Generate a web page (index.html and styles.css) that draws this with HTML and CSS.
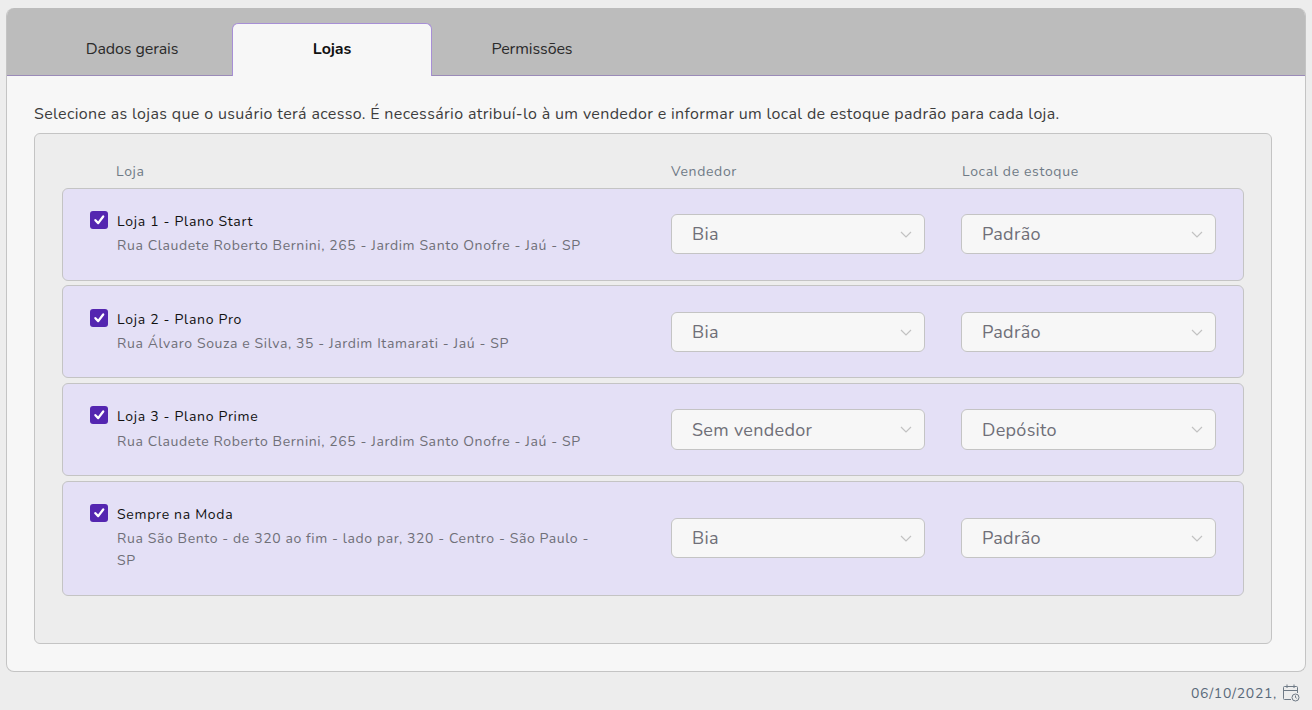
FILE: index.html
```html
<!DOCTYPE html>
<html lang="pt-BR">
<head>
<meta charset="utf-8">
<title>Lojas</title>
<link rel="stylesheet" href="styles.css">
</head>
<body>
<main class="card">
  <nav class="tabs">
    <div class="tab">Dados gerais</div>
    <div class="tab active">Lojas</div>
    <div class="tab">Permissões</div>
  </nav>
  <section class="content">
    <p class="intro">Selecione as lojas que o usuário terá acesso. É necessário atribuí-lo à um vendedor e informar um local de estoque padrão para cada loja.</p>
    <div class="panel">
      <div class="head">
        <span class="head-store">Loja</span>
        <span>Vendedor</span>
        <span>Local de estoque</span>
      </div>
      <div class="rows">
        <div class="row">
          <span class="check"><svg viewBox="0 0 18 18" width="18" height="18"><path d="M5.4 9.2l2.8 2.9 5-6.6" fill="none" stroke="#fff" stroke-width="2.3" stroke-linecap="round" stroke-linejoin="round"/></svg></span>
          <div class="store"><div class="name">Loja 1 - Plano Start</div><div class="addr">Rua Claudete Roberto Bernini, 265 - Jardim Santo Onofre - Jaú - SP</div></div>
          <div class="select"><span>Bia</span><svg class="chev" viewBox="0 0 12 7" width="12" height="7"><path d="M1 1l5 5 5-5" fill="none" stroke="#c2c2c2" stroke-width="1.2"/></svg></div>
          <div class="select"><span>Padrão</span><svg class="chev" viewBox="0 0 12 7" width="12" height="7"><path d="M1 1l5 5 5-5" fill="none" stroke="#c2c2c2" stroke-width="1.2"/></svg></div>
        </div>
        <div class="row">
          <span class="check"><svg viewBox="0 0 18 18" width="18" height="18"><path d="M5.4 9.2l2.8 2.9 5-6.6" fill="none" stroke="#fff" stroke-width="2.3" stroke-linecap="round" stroke-linejoin="round"/></svg></span>
          <div class="store"><div class="name">Loja 2 - Plano Pro</div><div class="addr">Rua Álvaro Souza e Silva, 35 - Jardim Itamarati - Jaú - SP</div></div>
          <div class="select"><span>Bia</span><svg class="chev" viewBox="0 0 12 7" width="12" height="7"><path d="M1 1l5 5 5-5" fill="none" stroke="#c2c2c2" stroke-width="1.2"/></svg></div>
          <div class="select"><span>Padrão</span><svg class="chev" viewBox="0 0 12 7" width="12" height="7"><path d="M1 1l5 5 5-5" fill="none" stroke="#c2c2c2" stroke-width="1.2"/></svg></div>
        </div>
        <div class="row">
          <span class="check"><svg viewBox="0 0 18 18" width="18" height="18"><path d="M5.4 9.2l2.8 2.9 5-6.6" fill="none" stroke="#fff" stroke-width="2.3" stroke-linecap="round" stroke-linejoin="round"/></svg></span>
          <div class="store"><div class="name">Loja 3 - Plano Prime</div><div class="addr">Rua Claudete Roberto Bernini, 265 - Jardim Santo Onofre - Jaú - SP</div></div>
          <div class="select"><span>Sem vendedor</span><svg class="chev" viewBox="0 0 12 7" width="12" height="7"><path d="M1 1l5 5 5-5" fill="none" stroke="#c2c2c2" stroke-width="1.2"/></svg></div>
          <div class="select"><span>Depósito</span><svg class="chev" viewBox="0 0 12 7" width="12" height="7"><path d="M1 1l5 5 5-5" fill="none" stroke="#c2c2c2" stroke-width="1.2"/></svg></div>
        </div>
        <div class="row tall">
          <span class="check"><svg viewBox="0 0 18 18" width="18" height="18"><path d="M5.4 9.2l2.8 2.9 5-6.6" fill="none" stroke="#fff" stroke-width="2.3" stroke-linecap="round" stroke-linejoin="round"/></svg></span>
          <div class="store"><div class="name">Sempre na Moda</div><div class="addr">Rua São Bento - de 320 ao fim - lado par, 320 - Centro - São Paulo - SP</div></div>
          <div class="select"><span>Bia</span><svg class="chev" viewBox="0 0 12 7" width="12" height="7"><path d="M1 1l5 5 5-5" fill="none" stroke="#c2c2c2" stroke-width="1.2"/></svg></div>
          <div class="select"><span>Padrão</span><svg class="chev" viewBox="0 0 12 7" width="12" height="7"><path d="M1 1l5 5 5-5" fill="none" stroke="#c2c2c2" stroke-width="1.2"/></svg></div>
        </div>
      </div>
    </div>
  </section>
</main>
<footer class="foot">
  <span>06/10/2021,</span>
  <svg viewBox="0 0 18 18" width="18" height="18" fill="none" stroke="#6f7a86" stroke-width="1"><path d="M9 15.5H2.5a1 1 0 0 1-1-1V3.5a1 1 0 0 1 1-1h12a1 1 0 0 1 1 1V9M1.5 6.5h14M5 .5v3.5M12 .5v3.5"/><circle cx="13.5" cy="13.5" r="3.5" fill="#ededed"/><path d="M13.5 11.5v2l1.2 .8"/></svg>
</footer>
</body>
</html>
```
FILE: styles.css
```css
* { box-sizing: border-box; }
html, body { height: 100%; }
body {
  margin: 0;
  padding: 8px 6px 0;
  background: #ededed;
  font-family: "Nunito", "Noto Sans", "Open Sans", sans-serif;
  color: #3d3d3d;
  overflow: hidden;
}
.card {
  height: 664px;
  background: #f7f7f7;
  border: 1px solid #c4c4c4;
  border-top: 0;
  border-radius: 8px;
  overflow: hidden;
}
.tabs {
  height: 68px;
  padding: 15px 0 0 25px;
  background: #bcbcbc;
  border-bottom: 1px solid #9b8bb8;
  display: flex;
}
.tab {
  width: 200px;
  height: 53px;
  display: flex;
  align-items: center;
  justify-content: center;
  font-size: 16px;
  letter-spacing: -0.1px;
  color: #2b2b2b;
  padding-bottom: 2px;
}
.tab.active {
  background: #f7f7f7;
  border: 1px solid #a78fd6;
  border-bottom: 0;
  border-radius: 6px 6px 0 0;
  font-weight: 700;
  color: #111;
}
.content { padding: 0 33px 0 27px; }
.intro {
  margin: 0;
  height: 57px;
  padding-top: 28px;
  font-size: 16px;
  letter-spacing: 0.35px;
  line-height: 20px;
  color: #3d3d3d;
  white-space: nowrap;
}
.panel {
  height: 511px;
  background: #ededed;
  border: 1px solid #c4c4c4;
  border-radius: 6px;
  padding: 0 27px;
}
.head {
  height: 53.8px;
  padding-top: 28px;
  display: grid;
  grid-template-columns: 54px 555px 291px 1fr;
  font-size: 14px;
  letter-spacing: 0.65px;
  line-height: 19px;
  color: #6f7a86;
}
.head-store { grid-column: 2; }
.rows { display: flex; flex-direction: column; gap: 4.8px; }
.row {
  height: 92.8px;
  background: #e4e0f6;
  border: 1px solid #c4c4c4;
  border-radius: 6px;
  padding: 0 27px;
  display: grid;
  grid-template-columns: 27px 554px 254px 36px 255px;
  align-items: center;
}
.row.tall { height: 115px; }
.check {
  align-self: start;
  margin-top: 22.2px;
  width: 18px;
  height: 18px;
  background: #5426b0;
  border-radius: 3px;
  display: block;
}
.check svg { display: block; }
.store { align-self: start; width: 480px; margin-top: 23.2px; }
.name { font-size: 14px; letter-spacing: 0.7px; line-height: 20px; color: #111; }
.addr { font-size: 14px; letter-spacing: 0.61px; line-height: 22px; margin-top: 3.45px; color: #6f6f78; }
.select {
  height: 40.3px;
  background: #f7f7f7;
  border: 1px solid #c4c4c4;
  border-radius: 6px;
  display: flex;
  align-items: center;
  justify-content: space-between;
  padding: 0.5px 12px 0 20px;
  font-size: 18px;
  letter-spacing: 0.3px;
  color: #6f6f78;
}
.select + .select { grid-column: 5; }
.foot {
  height: 38px;
  padding: 4px 6px 0 0;
  display: flex;
  justify-content: flex-end;
  align-items: center;
  gap: 5px;
  font-size: 14px;
  letter-spacing: 0.7px;
  color: #5a6a7a;
}
```
